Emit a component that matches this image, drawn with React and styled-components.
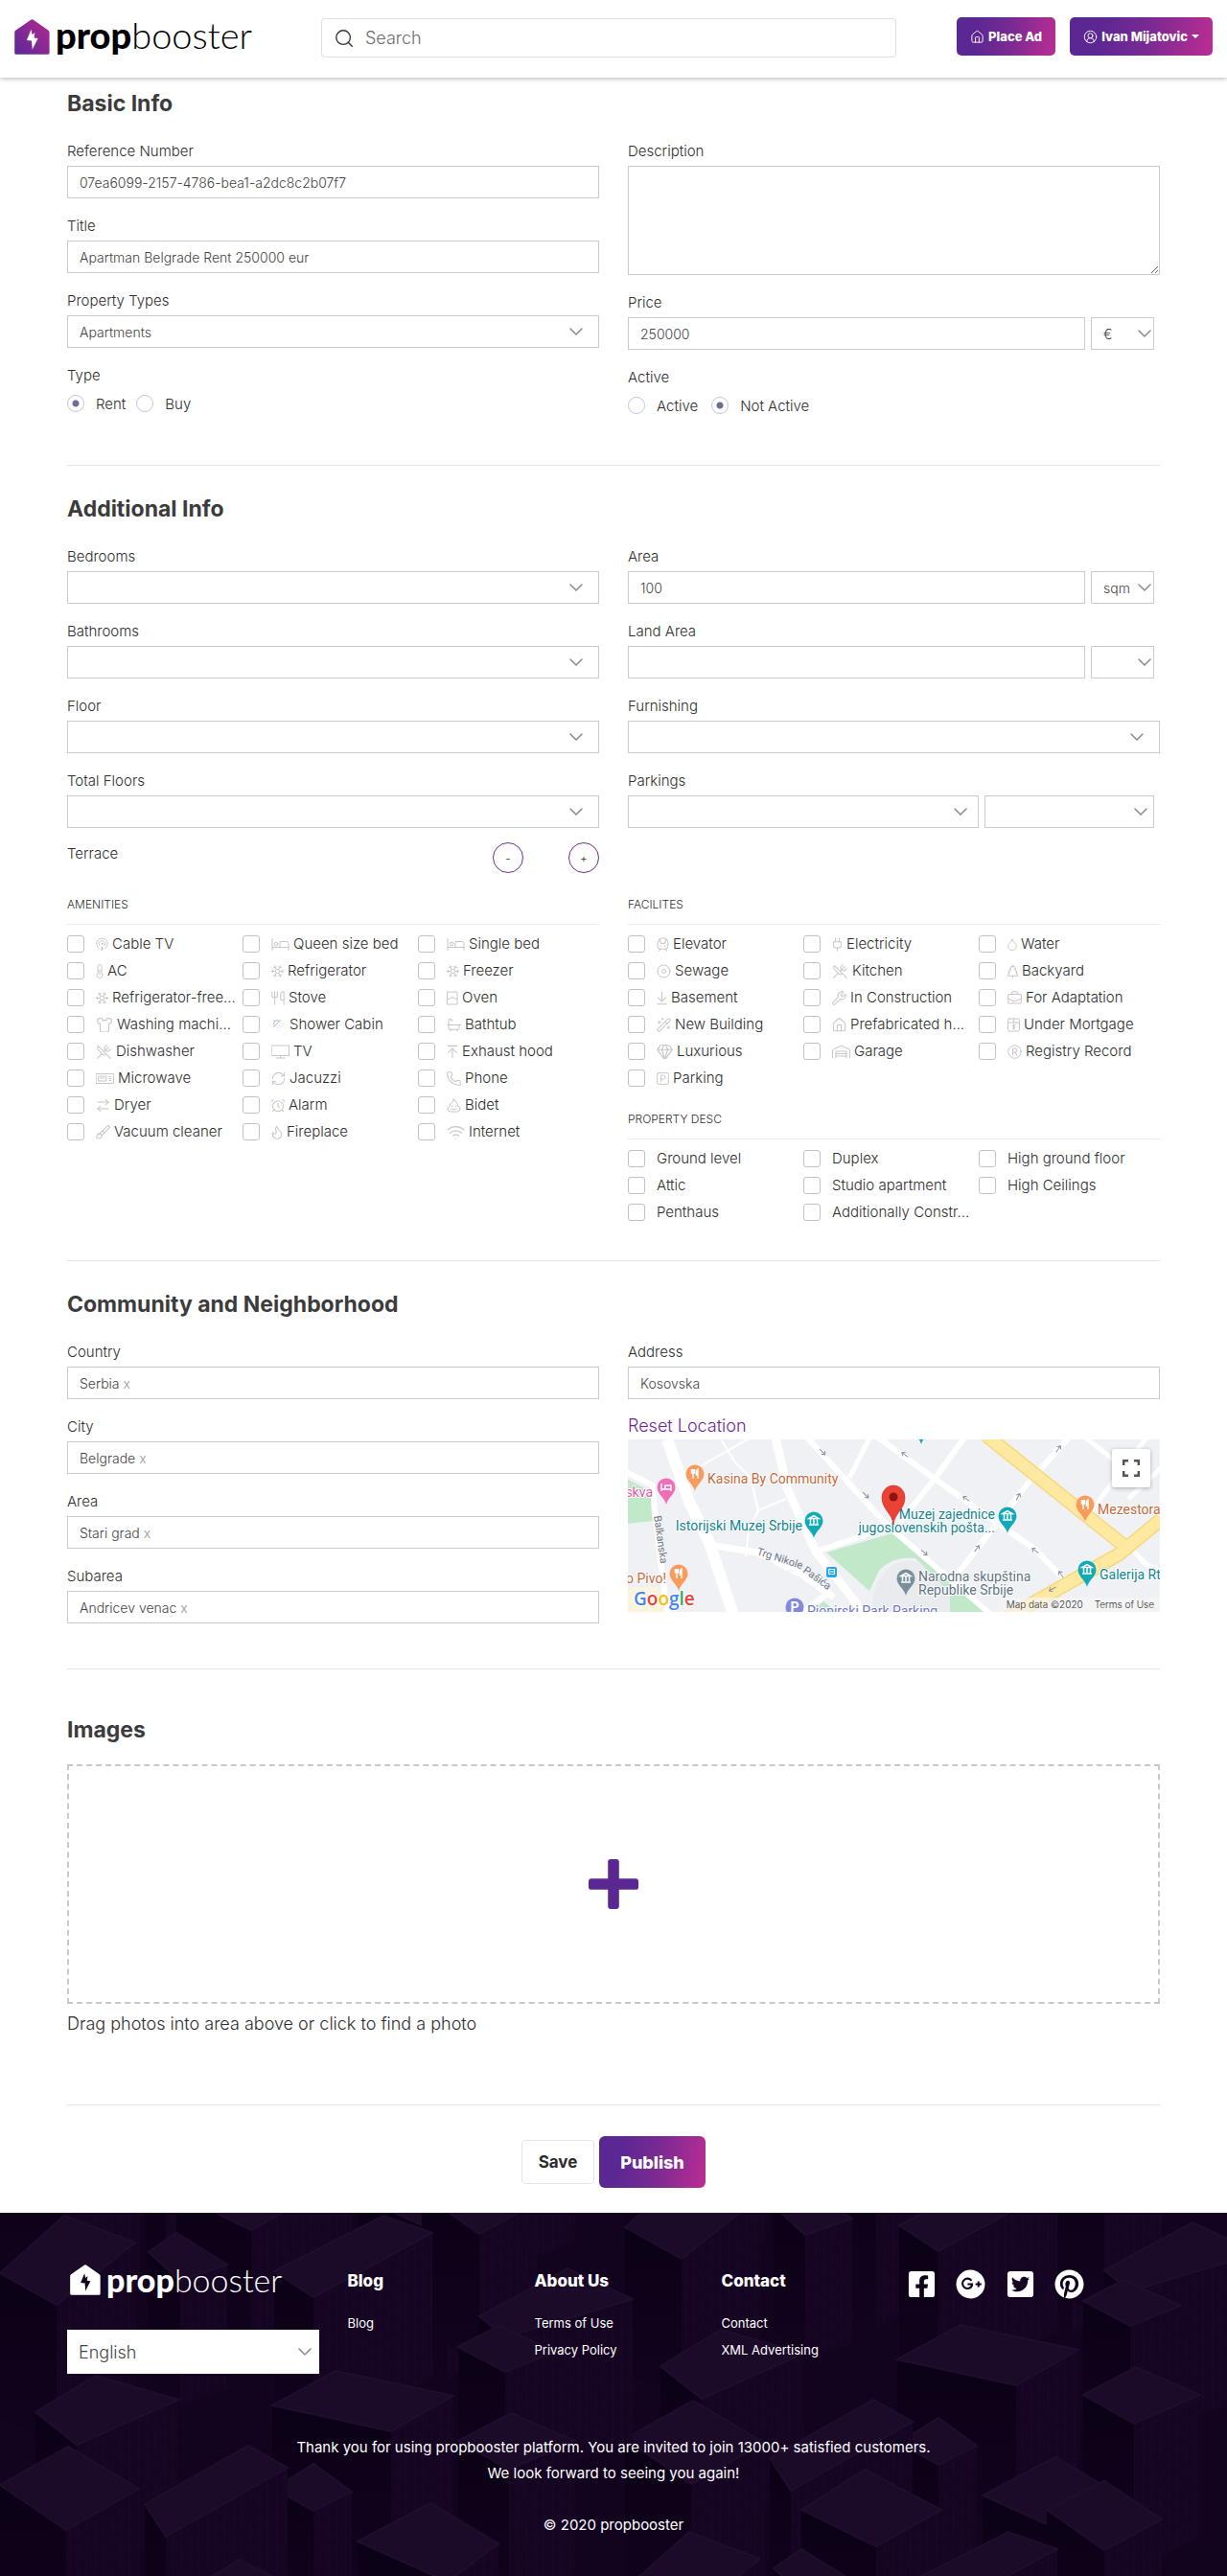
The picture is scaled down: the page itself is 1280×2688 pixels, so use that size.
import React, { useId } from "react";
import styled, { createGlobalStyle, css } from "styled-components";
import {
  AlarmClock, ArrowDownToLine, ArrowRightLeft, ArrowUpToLine, Bath, BriefcaseBusiness, Brush,
  ChevronDown, CircleUserRound, Droplet, Flame, Gem, House, Phone, Plug, Podcast, RefreshCw,
  Search, Shirt, ShowerHead, Snowflake, SquareParking, TrainFront, TreePine, Utensils,
  UtensilsCrossed, WandSparkles, Wifi, Wrench,
} from "lucide-react";
import { FaFacebookSquare, FaPinterest, FaTwitterSquare } from "react-icons/fa";

const GlobalStyle = createGlobalStyle`
  *, *::before, *::after { box-sizing: border-box; }
  body {
    margin: 0;
    background: #fff;
    color: #2e2e2e;
    font-family: Inter, "Liberation Sans", sans-serif;
    font-feature-settings: "calt" 0;
    font-weight: 300;
  }
  button, input, select, textarea { font: inherit; font-feature-settings: inherit; color: inherit; margin: 0; }
  h1, h2, h3, p, ul, fieldset { margin: 0; padding: 0; border: 0; }
  ul { list-style: none; }
  a { text-decoration: none; }
`;

const gradient = "linear-gradient(100deg, #5b2792 20%, #7a2a93 55%, #bb2d93 100%)";

/* ---------- header ---------- */

const Header = styled.header`
  display: grid;
  grid-template-columns: 320fr 600fr 330fr;
  align-items: start;
  height: 81px;
  padding: 18px 15px 0;
  box-shadow: 0 1px 5px rgba(0, 0, 0, 0.3);
`;

const LogoLink = styled.a`
  display: flex;
  align-items: flex-start;
  gap: 6px;
  color: ${(p) => (p.$small ? "#fff" : "#000")};
  justify-self: start;

  svg { flex: none; margin-top: ${(p) => (p.$small ? 0 : 2)}px; }
`;

const Wordmark = styled.span`
  font-family: Lato, sans-serif;
  font-size: ${(p) => (p.$small ? 34 : 38)}px;
  line-height: ${(p) => (p.$small ? 32 : 36)}px;
  font-weight: 300;

  strong { font-weight: 900; }
`;

const SearchBox = styled.label`
  display: flex;
  align-items: center;
  gap: 11px;
  height: 41px;
  margin-top: 1px;
  padding: 0 12px;
  border: 1px solid #dedede;
  border-radius: 4px;
  color: #333;

  input {
    flex: 1;
    min-width: 0;
    padding: 0;
    border: 0;
    outline: 0;
    background: none;
    font-size: 18px;
    line-height: 24px;
  }
  input::placeholder { color: #6c6c6c; opacity: 1; }
`;

const HeaderActions = styled.div`
  display: flex;
  justify-content: flex-end;
  gap: 15px;
`;

const HeaderButton = styled.button`
  display: flex;
  align-items: center;
  gap: 4px;
  height: 40px;
  padding: 0 14px;
  border: 0;
  border-radius: 5px;
  background: ${gradient};
  color: #fff;
  font-size: 13px;
  font-weight: 800;
  white-space: nowrap;
`;

const Caret = styled.span`
  border: 4px solid transparent;
  border-top-color: #fff;
  border-bottom: 0;
`;

/* ---------- form ---------- */

const Page = styled.main`
  max-width: 1170px;
  margin: 0 auto;
  padding: 12px 15px 26px;
`;

const Rule = styled.hr`
  height: 1px;
  margin: 0;
  border: 0;
  background: #e6e6e6;
`;

const Section = styled.section`
  padding: ${(p) => p.$top ?? 30}px 0 ${(p) => p.$bottom}px;
`;

const SectionTitle = styled.h2`
  margin-bottom: ${(p) => p.$gap ?? 25}px;
  color: #3c3c3c;
  font-size: 23px;
  line-height: 30px;
  font-weight: 700;
`;

const Columns = styled.div`
  display: grid;
  grid-template-columns: 1fr 1fr;
  column-gap: 30px;
`;

const Column = styled.div`
  display: flex;
  flex-direction: column;
  gap: 19px;
  min-width: 0;
`;

const labelText = css`
  display: block;
  font-size: 15px;
  line-height: 20px;
`;

const FieldLabel = styled.label`
  ${labelText}
  margin-bottom: 5px;
`;

const control = css`
  display: block;
  width: 100%;
  height: 34px;
  padding: 0 12px;
  border: 1px solid #cbcbcb;
  border-radius: 0;
  background: #fff;
  color: #444;
  font-size: 14px;
  outline: 0;
`;

const TextInput = styled.input`${control}`;

const TextArea = styled.textarea`
  ${control}
  height: 114px;
  padding: 8px 12px;
  resize: vertical;
`;

const SelectFrame = styled.div`
  position: relative;

  select {
    ${control}
    appearance: none;
  }
  svg {
    position: absolute;
    top: 5px;
    right: ${(p) => p.$inset}px;
    color: #8a8a8a;
    pointer-events: none;
  }
`;

const SplitRow = styled.div`
  display: grid;
  grid-template-columns: ${(p) => p.$split};
  gap: 6px;
  padding-right: 6px;
`;

const Choices = styled.div`
  display: flex;
  gap: ${(p) => p.$gap}px;
  padding-top: 5px;
`;

const RadioLabel = styled.label`
  display: flex;
  align-items: center;
  gap: 12px;
  height: 18px;
  font-size: 15px;

  input {
    appearance: none;
    width: 18px;
    height: 18px;
    border: 1px solid #c3c5da;
    border-radius: 50%;
  }
  input:checked {
    background: radial-gradient(circle, #6a7099 0 3px, transparent 4px);
  }
`;

const TagBox = styled.div`
  ${control}
  display: flex;
  align-items: center;
  gap: 4px;

  button {
    padding: 0;
    border: 0;
    background: none;
    color: #999;
  }
  input {
    flex: 1;
    min-width: 0;
    border: 0;
    outline: 0;
  }
`;

const Stepper = styled.div`
  display: flex;
  align-items: flex-start;
  gap: 47px;
  height: 32px;
  margin-top: -4px;

  span {
    ${labelText}
    flex: 1;
    padding-top: 2px;
  }
  button {
    width: 32px;
    height: 32px;
    padding: 0;
    border: 1px solid #6f2c91;
    border-radius: 50%;
    background: #fff;
    font-size: 12px;
  }
`;

const GroupTitle = styled.h3`
  padding-bottom: 10px;
  margin-bottom: 6px;
  border-bottom: 1px solid #e9e9e9;
  font-size: 12px;
  line-height: 20px;
  font-weight: 300;
`;

const CheckGrid = styled.div`
  display: grid;
  grid-template-columns: repeat(3, 183px);
  grid-auto-rows: 28px;
`;

const CheckLabel = styled.label`
  display: flex;
  align-items: center;
  gap: 12px;
  min-width: 0;
  font-size: 15px;

  input {
    flex: none;
    appearance: none;
    width: 18px;
    height: 18px;
    border: 1px solid #c0c0cd;
    border-radius: 3px;
  }
  input:checked { background: #6f2c91; }
`;

const CheckText = styled.span`
  line-height: 20px;
  white-space: nowrap;

  svg {
    margin-right: 4px;
    color: #c6c6c6;
    vertical-align: -3px;
  }
`;

const ResetLink = styled.a`
  display: block;
  margin: -3px 0 2px;
  color: #6b1f9b;
  font-size: 18px;
  line-height: 24px;
`;

const MapFrame = styled.div`
  position: relative;
  height: 180px;
  overflow: hidden;
  background: #f1f2f4;

  > svg { display: block; width: 100%; height: 100%; }
`;

const FullscreenButton = styled.button`
  position: absolute;
  top: 10px;
  right: 10px;
  display: grid;
  place-items: center;
  width: 40px;
  height: 40px;
  padding: 0;
  border: 0;
  border-radius: 2px;
  background: #fff;
  box-shadow: 0 1px 4px rgba(0, 0, 0, 0.3);
  color: #555;
`;

const MapCredits = styled.div`
  position: absolute;
  right: 0;
  bottom: 0;
  display: flex;
  gap: 12px;
  padding: 0 6px;
  background: rgba(245, 245, 245, 0.7);
  color: #333;
  font-size: 10px;
  line-height: 15px;

  a { color: inherit; }
`;

const DropZone = styled.button`
  display: grid;
  place-items: center;
  width: 100%;
  height: 250px;
  border: 2px dashed #c8c8c8;
  background: #fff;
  color: #5b2792;
`;

const DropHint = styled.p`
  margin-top: 9px;
  font-size: 18px;
  line-height: 24px;
`;

const Actions = styled.div`
  display: flex;
  align-items: center;
  justify-content: center;
  gap: 5px;
  padding-top: 32px;
`;

const SaveButton = styled.button`
  height: 46px;
  width: 76px;
  border: 1px solid #e3e3e3;
  border-radius: 4px;
  background: #fff;
  color: #2b2b2b;
  font-size: 17px;
  font-weight: 700;
`;

const PublishButton = styled.button`
  width: 111px;
  height: 54px;
  border: 0;
  border-radius: 6px;
  background: ${gradient};
  color: #fff;
  font-size: 18px;
  font-weight: 800;
`;

/* ---------- footer ---------- */

const Footer = styled.footer`
  position: relative;
  padding: 54px 0 40px;
  overflow: hidden;
  background: #12031e;
  color: #fff;
`;

const Skyline = styled.svg`
  position: absolute;
  inset: 0;
  width: 100%;
  height: 100%;
`;

const FooterInner = styled.div`
  position: relative;
  max-width: 1170px;
  margin: 0 auto;
`;

const FooterGrid = styled.div`
  display: grid;
  grid-template-columns: 3fr 2fr 2fr 2fr 3fr;

  > * { padding: 0 15px; }
`;

const FooterBrand = styled.div`
  > a { padding-left: 3px; }
`;

const LanguageFrame = styled.div`
  position: relative;
  margin-top: 36px;

  select {
    display: block;
    appearance: none;
    width: 100%;
    height: 46px;
    padding: 0 12px;
    border: 0;
    border-radius: 0;
    background: #fff;
    color: #444;
    font-size: 18px;
  }
  svg {
    position: absolute;
    top: 11px;
    right: 3px;
    color: #8a8a8a;
    pointer-events: none;
  }
`;

const FooterHeading = styled.h3`
  margin: 5px 0 18px;
  font-size: 17px;
  line-height: 24px;
  font-weight: 800;
`;

const FooterLinks = styled.ul`
  font-size: 13px;
  line-height: 28px;
  font-weight: 400;

  a { color: #fff; }
`;

const Socials = styled.div`
  display: flex;
  gap: 23px;
  padding-top: 5px;
`;

const SocialLink = styled.a`
  display: flex;
  justify-content: center;
  width: ${(p) => (p.$square ? 27 : 30)}px;
  height: 31px;
  color: #fff;

  svg { flex: none; }
`;

const Closing = styled.p`
  margin-top: ${(p) => p.$top}px;
  padding: 0 15px;
  font-size: 15px;
  line-height: 27px;
  font-weight: 400;
  text-align: center;
`;

/* ---------- drawings ---------- */

function HouseMark({ size, fill, bolt }) {
  return (
    <svg width={size} height={size} viewBox="0 0 36 36" aria-hidden="true">
      <defs>
        <linearGradient id="house" x1="0" y1="1" x2="1" y2="0">
          <stop offset="0" stopColor="#5a2798" />
          <stop offset="1" stopColor="#b52a92" />
        </linearGradient>
      </defs>
      <path d="M17 .6q1-.8 2 0L34.600 11.500q1 .8 1 1.800V34q0 1.800-1.800 1.800H2Q.2 35.800.2 34V13.300q0-1 1-1.800z" fill={fill} />
      <path d="M17 10.500 12.500 21.500l5 .3.700 9L24 19.500l-4-.6.800-5.400-2.600 2.300z" fill={bolt} />
    </svg>
  );
}

function Logo({ small }) {
  return (
    <LogoLink href="#" $small={small} aria-label="propbooster">
      <HouseMark size={small ? 32 : 37} fill={small ? "#fff" : "url(#house)"} bolt={small ? "#12031e" : "#fff"} />
      <Wordmark $small={small}><strong>prop</strong>booster</Wordmark>
    </LogoLink>
  );
}

const Glyph = ({ w, children }) => (
  <svg width={w} height="15" viewBox={`0 0 ${w} 15`} fill="none" stroke="currentColor" strokeWidth="1" strokeLinejoin="round" strokeLinecap="round" aria-hidden="true">
    {children}
  </svg>
);

const lu = (Icon, w = 15, viewBox = "1 1 22 22") => (
  <Icon width={w} height={15} viewBox={viewBox} strokeWidth={1.500} aria-hidden="true" />
);

const icons = {
  antenna: lu(Podcast, 13, "2 1 20 22"),
  bed: <Glyph w={19}><path d="M1 1.500v12M1 10.500h17v3M18 10.500V6.500q0-2-2-2H9v6" /><circle cx="5" cy="7" r="1.800" /></Glyph>,
  thermo: <Glyph w={8}><path d="M2 2.500a2 2 0 0 1 4 0v6.800a3 3 0 1 1-4 0z" /><path d="M4 6v5" /></Glyph>,
  snow: lu(Snowflake, 13, "2 1 20 22"),
  stove: lu(Utensils, 14, "2 1 20 22"),
  oven: <Glyph w={12}><rect x="1" y="1" width="10" height="13" /><path d="M1 9q2.500 0 3-2h4q.5 2 3 2" /></Glyph>,
  shirt: lu(Shirt, 18, "1 2 22 20"),
  shower: lu(ShowerHead, 15),
  bath: lu(Bath, 15),
  cutlery: lu(UtensilsCrossed, 17),
  tv: <Glyph w={19}><rect x=".5" y="1" width="18" height="10.500" /><path d="M9.500 11.500v2.500M5 14h9" /></Glyph>,
  hood: lu(ArrowUpToLine, 12, "4 1 16 22"),
  microwave: <Glyph w={19}><rect x=".5" y="2.500" width="18" height="10" /><path d="M3 5h8v5H3zM5 7h4M14 5.500h1.500M14 7.500h1.500M14 9.500h1.500" /></Glyph>,
  jacuzzi: lu(RefreshCw, 15),
  phone: lu(Phone, 15),
  dryer: lu(ArrowRightLeft, 15),
  alarm: lu(AlarmClock, 14, "2 1 20 22"),
  bidet: <Glyph w={15}><path d="M7 1q3 1 2.500 3.500Q12 5 11.500 8 14.500 9 14 11.500 13.500 14 11 14H4q-2.500 0-3-2.500Q.5 9 3.500 8 3 5 5.500 4.500 7.500 3.500 7 1z" /><path d="M5.500 8v.5M9.500 8v.5M5 11q2.500 1.800 5 0" /></Glyph>,
  broom: lu(Brush, 15),
  fire: lu(Flame, 12, "4 1 16 22"),
  wifi: lu(Wifi, 19, "1 3 22 18"),
  lift: lu(TrainFront, 13, "3 1 18 22"),
  plug: lu(Plug, 11, "4 1 16 22"),
  drop: lu(Droplet, 10, "4 1 16 22"),
  sewage: <Glyph w={15}><circle cx="7.500" cy="7.500" r="6.500" /><circle cx="7.500" cy="7.500" r="2" /></Glyph>,
  tree: lu(TreePine, 11, "4 1 16 22"),
  basement: lu(ArrowDownToLine, 11, "4 1 16 22"),
  wrench: lu(Wrench, 15),
  toolbox: lu(BriefcaseBusiness, 15),
  wand: lu(WandSparkles, 15),
  home: lu(House, 15),
  mortgage: <Glyph w={13}><rect x=".5" y="1" width="12" height="13" rx="1.500" /><path d="M.5 5h12M6.500 1v4M8 7.500H6q-1 .8 0 1.700h1.200q1 .8 0 1.800H5.200M6.500 7v5" /></Glyph>,
  gem: lu(Gem, 17, "1 2 22 20"),
  garage: <Glyph w={19}><path d="M.5 14V5.500L9.500 1l9 4.500V14M4 14V7h11v7M4 9.500h11M4 12h11" /></Glyph>,
  registry: <Glyph w={15}><circle cx="7.500" cy="7.500" r="6.700" /><path d="M5.500 11V4h2.500a2 2 0 0 1 0 4H5.500M8 8l1.800 3" /></Glyph>,
  parking: lu(SquareParking, 13, "2 1 20 22"),
};

const Chevron = () => <ChevronDown size={24} strokeWidth={1.500} aria-hidden="true" />;

function Pin({ x, y, color, kind }) {
  return (
    <g transform={`translate(${x} ${y})`}>
      <path d="M0 18 C-1.500 11-9.500 7-9.500 0a9.500 9.500 0 0 1 19 0C9.500 7 1.500 11 0 18z" fill={color} />
      <g stroke="#fff" strokeWidth="1.500" fill="none">
        {kind === "food" && <path d="M-3.500-5v4h3v-4M-2-5V5M3 5v-10q-2 2-1.500 6H3" />}
        {kind === "museum" && <path d="M-5-2.500 0-5.500l5 3zM-3.500-2v5M0-2v5M3.500-2v5M-5 4H5" />}
        {kind === "bed" && <path d="M-5-4v8M-5 2H5v2M5 2v-4h-6v4" />}
      </g>
    </g>
  );
}

const streets = [
  ["M41 0 64 65 85 108 111 186", 12],
  ["M-2 34 26 48 28 78 41 182", 6],
  ["M154 -2 166 51 196 117 247 182", 9],
  ["M85 110 135 118 180 140 215 165", 7],
  ["M186 -3 271 90 378 182", 6],
  ["M261 -2 320 41 425 115 464 155", 6],
  ["M253 -3 231 40", 5],
  ["M352 -3 320 41 284 86", 6],
  ["M461 -3 418 45 344 140", 6],
  ["M196 117 271 92", 6],
  ["M476 -3 514 27", 5],
  ["M558 28 522 62", 5],
  ["M542 -3 482 76", 5],
  ["M522 110 540 130 557 137", 5],
  ["M180 182 212 158", 6],
  ["M97 0 112 24 128 40 136 74M72 30 128 -2M123 122 126 95 136 74 165 62", 2],
];

const trafficArrows = [
  [203, 13, 45], [248, 58, 45], [289, 16, 215], [353, 62, 215], [309, 118, 42], [364, 114, -52],
  [407, 60, -62], [449, 10, -55], [425, 116, 215], [452, 141, 235], [443, 156, 150],
];

function CityMap() {
  return (
    <svg viewBox="0 0 555 180" preserveAspectRatio="xMidYMid slice" role="img" aria-label="Map of the property location" fontFamily="Roboto, sans-serif" fontSize="14" fontWeight="400">
      <rect width="555" height="180" fill="#f0f1f4" />
      <path d="M0 42 24 54 26 85 0 88z" fill="#c2e8ca" />
      <path d="M0 155 30 153 40 180H0z" fill="#fdf4dc" />
      <path d="M207 118 279 97 378 182H335L336 160 300 124Q275 122 262 137L252 158z" fill="#c2e8ca" />
      <path d="M256 182Q252 150 275 132 300 118 312 138L336 160V182z" fill="#e9ebef" />
      <path d="M192 180 204 169 218 180z" fill="#c2e8ca" />
      <g fill="none" stroke="#fff" strokeLinejoin="round">
        {streets.map(([d, w]) => <path key={d} d={d} strokeWidth={w} />)}
      </g>
      <g fill="none" stroke="#f5d77e" strokeWidth="15"><path d="M374 -4 519 112M558 82 512 120 396 186" /></g>
      <g fill="none" stroke="#ffe89f" strokeWidth="12"><path d="M374 -4 519 112M558 82 512 120 396 186" /></g>
      <g fill="none" stroke="#8b93a3" strokeWidth="1">
        {trafficArrows.map(([x, y, r]) => <path key={`${x}-${y}`} d="M-4 0H4M1-2.500 4 0 1 2.500" transform={`translate(${x} ${y}) rotate(${r})`} />)}
      </g>
      <g fill="#6f7683" fontSize="11">
        <text transform="translate(27 80) rotate(82)">Balkanska</text>
        <text transform="translate(134 120) rotate(18)">Trg Nikole</text>
        <text transform="translate(182 138) rotate(36)">Pašića</text>
      </g>
      <g stroke="#fff" strokeWidth="2" strokeLinejoin="round" paintOrder="stroke">
        <g fill="#c5693b">
          <text x="83" y="46">Kasina By Community</text>
          <text x="490" y="78">Mezestora</text>
          <text x="40" y="150" textAnchor="end">o Pivo!</text>
        </g>
        <text x="26" y="60" textAnchor="end" fill="#e05aa8">skva</text>
        <g fill="#12858f">
          <text x="182" y="95" textAnchor="end">Istorijski Muzej Srbije</text>
          <text x="383" y="83" textAnchor="end">Muzej zajednice</text>
          <text x="383" y="97" textAnchor="end">jugoslovenskih pošta...</text>
          <text x="492" y="146">Galerija Rt</text>
        </g>
        <g fill="#5f7482">
          <text x="303" y="148">Narodna skupština</text>
          <text x="303" y="162">Republike Srbije</text>
        </g>
        <text x="187" y="184" fill="#6d75c9">Pionirski Park Parking</text>
      </g>
      <Pin x={70} y={36} color="#fb9a5b" kind="food" />
      <Pin x={477} y={68} color="#fb9a5b" kind="food" />
      <Pin x={53} y={140} color="#fb9a5b" kind="food" />
      <Pin x={40} y={50} color="#f06eb8" kind="bed" />
      <Pin x={194} y={85} color="#12aab8" kind="museum" />
      <Pin x={396} y={80} color="#12aab8" kind="museum" />
      <Pin x={479} y={136} color="#12aab8" kind="museum" />
      <Pin x={306} y={-13} color="#12aab8" />
      <Pin x={290} y={145} color="#78909c" kind="museum" />
      <rect x="207" y="133" width="11" height="11" rx="2" fill="#1fa9ee" />
      <path d="M209.500 135.500h6v5h-6zM209.500 138h6" fill="none" stroke="#fff" />
      <circle cx="174" cy="175" r="9.500" fill="#8288e0" />
      <text x="174" y="180" textAnchor="middle" fill="#fff" fontWeight="700">P</text>
      <path d="M277 89C276 77 265 73 265 60.500a12 12.500 0 0 1 24 0C289 73 278 77 277 89z" fill="#ea4335" stroke="#c5221f" strokeWidth=".6" />
      <circle cx="277" cy="60" r="4.500" fill="#8c1512" />
      <text x="6" y="173" fontFamily="Open Sans, sans-serif" fontSize="19" fontWeight="600" stroke="#fff" strokeWidth="2" paintOrder="stroke">
        <tspan fill="#4285f4">G</tspan><tspan fill="#ea4335">o</tspan><tspan fill="#fbbc05">o</tspan>
        <tspan fill="#4285f4">g</tspan><tspan fill="#34a853">l</tspan><tspan fill="#ea4335">e</tspan>
      </text>
    </svg>
  );
}

/* Roof corners (left, top, right, bottom) and wall height of each block, back to front. */
const blocks = [
  [184, -20, 250, -62, 330, -20, 262, 18, 150],
  [440, -20, 500, -50, 560, -10, 500, 22, 140],
  [155, 41, 184, 21, 237, 54, 188, 71, 130],
  [0, 63, 67, 3, 141, 31, 59, 96, 150],
  [286, 61, 400, 3, 451, 21, 327, 88, 150],
  [500, 108, 592, 58, 660, 90, 527, 130, 150],
  [478, 140, 520, 118, 580, 145, 527, 166, 130],
  [37, 208, 100, 170, 186, 195, 80, 242, 140],
  [284, 201, 350, 165, 473, 191, 408, 228, 150],
  [478, 238, 533, 209, 600, 238, 531, 268, 150],
  [286, 288, 327, 262, 367, 291, 327, 311, 110],
  [0, 284, 71, 244, 145, 288, 69, 331, 150],
  [151, 304, 259, 243, 300, 266, 173, 338, 150],
  [373, 343, 449, 303, 520, 345, 467, 385, 150],
  [200, 392, 250, 362, 310, 392, 250, 420, 100],
];

function FooterArt() {
  return (
    <Skyline viewBox="0 0 1280 379" preserveAspectRatio="xMidYMid slice" aria-hidden="true">
      <defs>
        <pattern id="windows" width="9" height="14" patternUnits="userSpaceOnUse" patternTransform="skewY(-28)">
          <rect width="9" height="14" fill="#150522" />
          <path d="M0 0V14M0 0H9" stroke="#1a0928" strokeWidth="1" />
        </pattern>
        <linearGradient id="shade" x1="0" y1="0" x2="0" y2="1">
          <stop offset="0" stopColor="#0b0116" />
          <stop offset="1" stopColor="#12031e" />
        </linearGradient>
        <g id="city">
          {blocks.map(([lx, ly, tx, ty, rx, ry, bx, by, h]) => (
            <g key={`${lx}-${ly}`}>
              <path d={`M${lx} ${ly}L${bx} ${by}V${by + h}L${lx} ${ly + h}z`} fill="url(#shade)" />
              <path d={`M${bx} ${by}L${rx} ${ry}V${ry + h}L${bx} ${by + h}z`} fill="url(#windows)" />
              <path d={`M${lx} ${ly}L${tx} ${ty}L${rx} ${ry}L${bx} ${by}z`} fill="#1b0b29" stroke="#1f0e2e" strokeWidth="2" />
            </g>
          ))}
        </g>
      </defs>
      <rect width="1280" height="379" fill="#12031e" />
      <use href="#city" x="652" y="-410" />
      <use href="#city" x="0" y="-360" />
      <use href="#city" x="1304" y="-96" />
      <use href="#city" x="652" y="-48" />
      <use href="#city" />
      <use href="#city" x="652" y="330" />
    </Skyline>
  );
}

/* ---------- form parts ---------- */

function Field({ label, children }) {
  const id = useId();
  return (
    <div>
      <FieldLabel htmlFor={id}>{label}</FieldLabel>
      {children(id)}
    </div>
  );
}

const TextField = ({ label, value }) => (
  <Field label={label}>{(id) => <TextInput id={id} defaultValue={value} />}</Field>
);

const Select = ({ value = "", inset = 12, ...rest }) => (
  <SelectFrame $inset={inset}>
    <select defaultValue={value} {...rest}>
      <option value={value}>{value}</option>
    </select>
    <Chevron />
  </SelectFrame>
);

const SelectField = ({ label, value }) => (
  <Field label={label}>{(id) => <Select id={id} value={value} />}</Field>
);

const UnitField = ({ label, value, unit }) => (
  <Field label={label}>
    {(id) => (
      <SplitRow $split="1fr 66px">
        <TextInput id={id} defaultValue={value} />
        <Select value={unit} inset={-2} aria-label={`${label} unit`} />
      </SplitRow>
    )}
  </Field>
);

const TagField = ({ label, tag }) => (
  <Field label={label}>
    {(id) => (
      <TagBox>
        <span>{tag}</span>
        <button type="button" aria-label={`Remove ${tag}`}>x</button>
        <input id={id} />
      </TagBox>
    )}
  </Field>
);

const RadioField = ({ label, name, options, selected, gap }) => (
  <div role="radiogroup" aria-label={label}>
    <FieldLabel as="span">{label}</FieldLabel>
    <Choices $gap={gap}>
      {options.map((option) => (
        <RadioLabel key={option}>
          <input type="radio" name={name} defaultChecked={option === selected} />
          {option}
        </RadioLabel>
      ))}
    </Choices>
  </div>
);

const CheckGroup = ({ title, items }) => (
  <div>
    <GroupTitle>{title}</GroupTitle>
    <CheckGrid>
      {items.map(([text, icon]) => (
        <CheckLabel key={text}>
          <input type="checkbox" />
          <CheckText>{icon && icons[icon]}{text}</CheckText>
        </CheckLabel>
      ))}
    </CheckGrid>
  </div>
);

const amenities = [
  ["Cable TV", "antenna"], ["Queen size bed", "bed"], ["Single bed", "bed"],
  ["AC", "thermo"], ["Refrigerator", "snow"], ["Freezer", "snow"],
  ["Refrigerator-free...", "snow"], ["Stove", "stove"], ["Oven", "oven"],
  ["Washing machi...", "shirt"], ["Shower Cabin", "shower"], ["Bathtub", "bath"],
  ["Dishwasher", "cutlery"], ["TV", "tv"], ["Exhaust hood", "hood"],
  ["Microwave", "microwave"], ["Jacuzzi", "jacuzzi"], ["Phone", "phone"],
  ["Dryer", "dryer"], ["Alarm", "alarm"], ["Bidet", "bidet"],
  ["Vacuum cleaner", "broom"], ["Fireplace", "fire"], ["Internet", "wifi"],
];

const facilities = [
  ["Elevator", "lift"], ["Electricity", "plug"], ["Water", "drop"],
  ["Sewage", "sewage"], ["Kitchen", "cutlery"], ["Backyard", "tree"],
  ["Basement", "basement"], ["In Construction", "wrench"], ["For Adaptation", "toolbox"],
  ["New Building", "wand"], ["Prefabricated h...", "home"], ["Under Mortgage", "mortgage"],
  ["Luxurious", "gem"], ["Garage", "garage"], ["Registry Record", "registry"],
  ["Parking", "parking"],
];

const descriptions = [
  ["Ground level"], ["Duplex"], ["High ground floor"],
  ["Attic"], ["Studio apartment"], ["High Ceilings"],
  ["Penthaus"], ["Additionally Constr..."],
];

const footerColumns = [
  ["Blog", ["Blog"]],
  ["About Us", ["Terms of Use", "Privacy Policy"]],
  ["Contact", ["Contact", "XML Advertising"]],
];

const GroupColumns = styled(Columns)`
  margin-top: 23px;
`;

export default function App() {
  return (
    <>
      <GlobalStyle />
      <Header>
        <Logo />
        <SearchBox>
          <Search size={22} strokeWidth={1.500} aria-hidden="true" />
          <input type="search" placeholder="Search" aria-label="Search" />
        </SearchBox>
        <HeaderActions>
          <HeaderButton><House size={15} strokeWidth={1.500} aria-hidden="true" />Place Ad</HeaderButton>
          <HeaderButton><CircleUserRound size={15} strokeWidth={1.500} aria-hidden="true" />Ivan Mijatovic<Caret /></HeaderButton>
        </HeaderActions>
      </Header>

      <Page>
        <Section $top={0} $bottom={53}>
          <SectionTitle>Basic Info</SectionTitle>
          <Columns>
            <Column>
              <TextField label="Reference Number" value="07ea6099-2157-4786-bea1-a2dc8c2b07f7" />
              <TextField label="Title" value="Apartman Belgrade Rent 250000 eur" />
              <SelectField label="Property Types" value="Apartments" />
              <RadioField label="Type" name="type" options={["Rent", "Buy"]} selected="Rent" gap={11} />
            </Column>
            <Column>
              <Field label="Description">{(id) => <TextArea id={id} />}</Field>
              <UnitField label="Price" value="250000" unit="€" />
              <RadioField label="Active" name="active" options={["Active", "Not Active"]} selected="Not Active" gap={14} />
            </Column>
          </Columns>
        </Section>
        <Rule />

        <Section $bottom={36}>
          <SectionTitle>Additional Info</SectionTitle>
          <Columns>
            <Column>
              <SelectField label="Bedrooms" />
              <SelectField label="Bathrooms" />
              <SelectField label="Floor" />
              <SelectField label="Total Floors" />
              <Stepper>
                <span>Terrace</span>
                <button type="button" aria-label="Fewer terraces">-</button>
                <button type="button" aria-label="More terraces">+</button>
              </Stepper>
            </Column>
            <Column>
              <UnitField label="Area" value="100" unit="sqm" />
              <UnitField label="Land Area" />
              <SelectField label="Furnishing" />
              <Field label="Parkings">
                {(id) => (
                  <SplitRow $split="366fr 177fr">
                    <Select id={id} inset={7} />
                    <Select inset={2} aria-label="Parking type" />
                  </SplitRow>
                )}
              </Field>
            </Column>
          </Columns>
          <GroupColumns>
            <Column>
              <CheckGroup title="AMENITIES" items={amenities} />
            </Column>
            <Column>
              <CheckGroup title="FACILITES" items={facilities} />
              <CheckGroup title="PROPERTY DESC" items={descriptions} />
            </Column>
          </GroupColumns>
        </Section>
        <Rule />

        <Section $bottom={47}>
          <SectionTitle>Community and Neighborhood</SectionTitle>
          <Columns>
            <Column>
              <TagField label="Country" tag="Serbia" />
              <TagField label="City" tag="Belgrade" />
              <TagField label="Area" tag="Stari grad" />
              <TagField label="Subarea" tag="Andricev venac" />
            </Column>
            <Column>
              <TextField label="Address" value="Kosovska" />
              <div>
                <ResetLink href="#">Reset Location</ResetLink>
                <MapFrame>
                  <CityMap />
                  <FullscreenButton type="button" aria-label="Toggle fullscreen view">
                    <svg width="18" height="18" viewBox="0 0 18 18" fill="none" stroke="currentColor" strokeWidth="2.500" aria-hidden="true">
                      <path d="M1.200 6V1.200H6M12 1.200h4.800V6M16.800 12v4.800H12M6 16.800H1.200V12" />
                    </svg>
                  </FullscreenButton>
                  <MapCredits><span>Map data ©2020</span><a href="#">Terms of Use</a></MapCredits>
                </MapFrame>
              </div>
            </Column>
          </Columns>
        </Section>
        <Rule />

        <Section $top={48} $bottom={72}>
          <SectionTitle $gap={21}>Images</SectionTitle>
          <DropZone type="button" aria-label="Add photos">
            <svg width="52" height="52" viewBox="0 0 54 54" fill="currentColor" aria-hidden="true">
              <rect x="21" y="0" width="12" height="54" rx="3" />
              <rect x="0" y="21" width="54" height="12" rx="3" />
            </svg>
          </DropZone>
          <DropHint>Drag photos into area above or click to find a photo</DropHint>
        </Section>
        <Rule />

        <Actions>
          <SaveButton type="button">Save</SaveButton>
          <PublishButton type="button">Publish</PublishButton>
        </Actions>
      </Page>

      <Footer>
        <FooterArt />
        <FooterInner>
          <FooterGrid>
            <FooterBrand>
              <Logo small />
              <LanguageFrame>
                <select aria-label="Language" defaultValue="English"><option>English</option></select>
                <Chevron />
              </LanguageFrame>
            </FooterBrand>
            {footerColumns.map(([title, links]) => (
              <div key={title}>
                <FooterHeading>{title}</FooterHeading>
                <FooterLinks>
                  {links.map((link) => <li key={link}><a href="#">{link}</a></li>)}
                </FooterLinks>
              </div>
            ))}
            <Socials>
              <SocialLink $square href="#" aria-label="Facebook"><FaFacebookSquare size={31} /></SocialLink>
              <SocialLink href="#" aria-label="Google Plus">
                <svg width="31" height="31" viewBox="0 0 30 30" aria-hidden="true">
                  <circle cx="15" cy="15" r="14.500" fill="#fff" />
                  <path d="M16 11.500A5 5 0 1 0 16.500 16.200V15H12M20 15h6M23 12v6" fill="none" stroke="#12031e" strokeWidth="2" />
                </svg>
              </SocialLink>
              <SocialLink $square href="#" aria-label="Twitter"><FaTwitterSquare size={31} /></SocialLink>
              <SocialLink href="#" aria-label="Pinterest"><FaPinterest size={31} /></SocialLink>
            </Socials>
          </FooterGrid>
          <Closing $top={63}>
            Thank you for using propbooster platform. You are invited to join 13000+ satisfied customers.
            <br />
            We look forward to seeing you again!
          </Closing>
          <Closing $top={27}>© 2020 propbooster</Closing>
        </FooterInner>
      </Footer>
    </>
  );
}
